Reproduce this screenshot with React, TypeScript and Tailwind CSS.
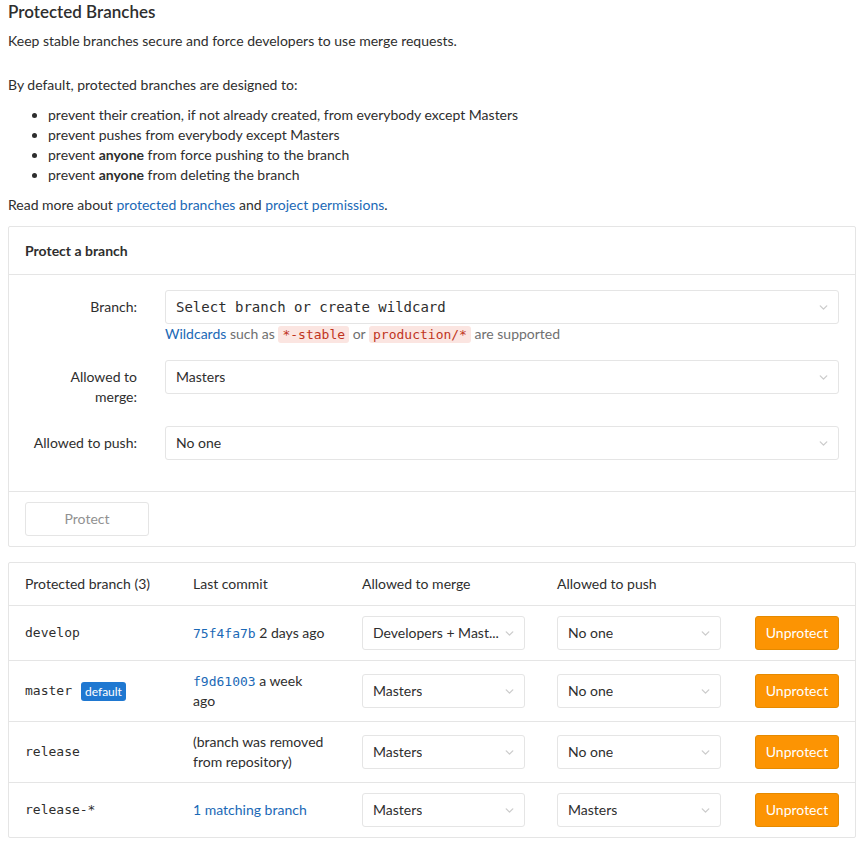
import { ChevronDown } from "lucide-react";

const sans = "font-['Lato','Liberation_Sans',sans-serif]";
const mono = "font-['DejaVu_Sans_Mono','Liberation_Mono',monospace]";

type Rule = {
  name: string;
  isDefault?: boolean;
  hash?: string;
  when?: string;
  note?: string;
  matching?: string;
  merge: string;
  push: string;
};

const rules: Array<Rule> = [
  { name: "develop", hash: "75f4fa7b", when: "2 days ago", merge: "Developers + Mast...", push: "No one" },
  { name: "master", isDefault: true, hash: "f9d61003", when: "a week ago", merge: "Masters", push: "No one" },
  { name: "release", note: "(branch was removed from repository)", merge: "Masters", push: "No one" },
  { name: "release-*", matching: "1 matching branch", merge: "Masters", push: "Masters" },
];

function Select({ value, className, monoText }: { value: string; className?: string; monoText?: boolean }) {
  return (
    <div
      className={`flex h-[34px] items-center justify-between rounded-[3px] border border-[#e5e5e5] bg-white pl-[10px] pr-[8px] ${className ?? ""}`}
    >
      <span className={`truncate ${monoText ? `${mono} text-[14px] text-[#2e2e2e]` : "text-[#2e2e2e]"}`}>{value}</span>
      <ChevronDown size={13} strokeWidth={2.5} className="shrink-0 text-[#cccccc]" />
    </div>
  );
}

function Code({ children }: { children: string }) {
  return (
    <code className={`${mono} rounded-[3px] bg-[#fbe5e1] px-[4px] py-[1px] text-[13px] text-[#c0341d]`}>{children}</code>
  );
}

function FormRow({ label, children, className }: { label: string; children: React.ReactNode; className?: string }) {
  return (
    <div className={`flex ${className ?? ""}`}>
      <div className="w-[140px] shrink-0 pr-[28px] pt-[7px] text-right">
        <label className="inline-block w-[108px] text-[#2e2e2e]">{label}</label>
      </div>
      <div className="flex-1">{children}</div>
    </div>
  );
}

export default function App() {
  return (
    <div className={`${sans} min-h-[842px] bg-white px-2 text-[14px] leading-[20px] text-[#2e2e2e]`}>
      <h4 className="pt-0 text-[17px] leading-[24px] font-semibold text-[#2e2e2e]">Protected Branches</h4>
      <p className="mt-[7px]">Keep stable branches secure and force developers to use merge requests.</p>
      <p className="mt-[24px]">By default, protected branches are designed to:</p>
      <ul className="mt-[10px] list-disc pl-[40px] marker:text-[#2e2e2e]">
        <li>prevent their creation, if not already created, from everybody except Masters</li>
        <li>prevent pushes from everybody except Masters</li>
        <li>
          prevent <strong className="font-bold">anyone</strong> from force pushing to the branch
        </li>
        <li>
          prevent <strong className="font-bold">anyone</strong> from deleting the branch
        </li>
      </ul>
      <p className="mt-[10px]">
        Read more about <a className="text-[#1b69b6]">protected branches</a> and{" "}
        <a className="text-[#1b69b6]">project permissions</a>.
      </p>

      <div className="mt-[11px] rounded-[2px] border border-[#e5e5e5]">
        <div className="flex h-[48px] items-center border-b border-[#e5e5e5] px-4 font-bold">Protect a branch</div>
        <div className="px-4 pt-[15px] pb-[31px]">
          <FormRow label="Branch:">
            <Select value="Select branch or create wildcard" monoText />
            <p className="text-[#707070]">
              <a className="text-[#1b69b6]">Wildcards</a> such as <Code>*-stable</Code> or <Code>production/*</Code>{" "}
              are supported
            </p>
          </FormRow>
          <FormRow label="Allowed to merge:" className="mt-[15px]">
            <Select value="Masters" />
          </FormRow>
          <FormRow label="Allowed to push:" className="mt-[19px]">
            <Select value="No one" />
          </FormRow>
        </div>
        <div className="border-t border-[#e5e5e5] px-4 py-[10px]">
          <button className="h-[34px] w-[124px] rounded-[3px] border border-[#e5e5e5] bg-white text-[#919191]">
            Protect
          </button>
        </div>
      </div>

      <div className="mt-[15px] rounded-[2px] border border-[#e5e5e5]">
        <div className="grid h-[42px] grid-cols-[168px_169px_195px_1fr_auto] items-center px-4">
          <span>Protected branch (3)</span>
          <span>Last commit</span>
          <span>Allowed to merge</span>
          <span>Allowed to push</span>
          <span className="w-[84px]" />
        </div>
        {rules.map((rule) => (
          <div
            key={rule.name}
            className="grid grid-cols-[168px_169px_195px_1fr_auto] items-center border-t border-[#e5e5e5] px-4 py-[10px]"
          >
            <div className="flex items-center gap-[9px]">
              <span className={`${mono} text-[13px]`}>{rule.name}</span>
              {rule.isDefault && (
                <span className="rounded-[3px] bg-[#1f78d1] px-[4px] text-[12px] leading-[19px] text-white">default</span>
              )}
            </div>
            <div className="pr-[36px]">
              {rule.hash && (
                <>
                  <a className={`${mono} text-[13px] leading-none text-[#1b69b6]`}>{rule.hash}</a> {rule.when}
                </>
              )}
              {rule.note && <span>{rule.note}</span>}
              {rule.matching && <a className="text-[#1b69b6]">{rule.matching}</a>}
            </div>
            <Select value={rule.merge} className="w-[163px]" />
            <Select value={rule.push} className="w-[164px]" />
            <button className="h-[34px] w-[84px] rounded-[3px] border border-[#e58a00] bg-[#fc9403] text-white">
              Unprotect
            </button>
          </div>
        ))}
      </div>
    </div>
  );
}
